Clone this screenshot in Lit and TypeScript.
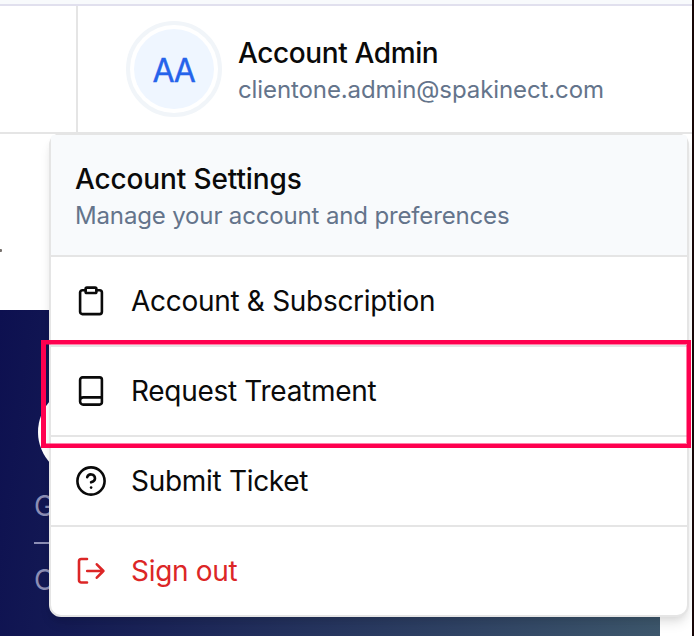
import { LitElement, html, css, svg } from "lit";
import { customElement } from "lit/decorators.js";
import { classMap } from "lit/directives/class-map.js";

const clipboard = svg`<rect x="9.600" y="1.600" width="10.800" height="5.400" rx="1.300"/><path d="M20.400 4.200h3.200a2.300 2.300 0 0 1 2.300 2.300v19.300a2.300 2.300 0 0 1-2.300 2.300H6.400a2.300 2.300 0 0 1-2.300-2.300V6.500a2.300 2.300 0 0 1 2.300-2.300h3.200"/>`;
const book = svg`<path d="M4.100 25V3.900a2.500 2.500 0 0 1 2.500-2.500h17a2.300 2.300 0 0 1 2.300 2.300v22.600a2.300 2.300 0 0 1-2.300 2.300H7.200a3.100 3.100 0 0 1-3.100-3.100V24.500a3.100 3.100 0 0 1 3.100-3.100h18.700"/>`;
const help = svg`<circle cx="15" cy="15" r="13.600"/><path d="M11.200 11.200a4 4 0 0 1 7.800 1.200c0 2.600-3.900 3.900-3.900 3.900"/><path d="M15.100 21.600h.01"/>`;
const logout = svg`<path d="M11 3H5.300A2.300 2.300 0 0 0 3 5.300v18.900a2.300 2.300 0 0 0 2.300 2.300H11"/><path d="M11.200 15h16.200M20.800 8.300l6.600 6.700-6.600 6.700"/>`;

const items = [
  { label: "Account & Subscription", icon: clipboard },
  { label: "Request Treatment", icon: book },
  { label: "Submit Ticket", icon: help },
  { label: "Sign out", icon: logout, danger: true },
];

@customElement("app-root")
export class AppRoot extends LitElement {
  static styles = css`
    :host {
      display: block;
      position: relative;
      width: 694px;
      height: 636px;
      overflow: hidden;
      box-sizing: border-box;
      border-right: 2px solid #160607;
      background: #fff;
      color: #0a0a0a;
      font-family: Inter, sans-serif;
    }
    * { box-sizing: border-box; }
    .page { display: flex; flex-direction: column; height: 100%; }
    .strip { height: 6px; background: #f8fafc; border-bottom: 2px solid #e1e0ee; }
    .bar { display: flex; height: 128px; border-bottom: 2px solid #e5e5e5; }
    .left { width: 78px; border-right: 2px solid #e5e5e5; }
    .user { display: flex; align-items: center; gap: 16px; padding-left: 48px; }
    .avatar {
      width: 96px; height: 96px; border-radius: 50%;
      border: 4px solid #f1f5f9; padding: 4px; background: #fff;
    }
    .initials {
      display: flex; align-items: center; justify-content: center;
      height: 100%; border-radius: 50%; background: #eff6ff;
      color: #2563eb; font-size: 32px; letter-spacing: -1.2px; padding: 2px 1px 0 0;
      -webkit-text-stroke: 0.4px #2563eb;
    }
    .title { font-size: 28px; line-height: 36px; font-weight: 500; white-space: nowrap; }
    .name { letter-spacing: -0.38px; }
    .heading { letter-spacing: -0.13px; }
    .sub { margin-top: 3px; font-size: 24px; line-height: 32px; color: #64748b; white-space: nowrap; }
    .email { letter-spacing: -0.1px; }
    .manage { letter-spacing: -0.15px; }
    .who { padding-top: 3px; }
    .body { height: 176px; padding-top: 115px; }
    .dot { width: 2px; height: 3px; background: #77716d; border-radius: 0 1px 1px 0; }
    .hero {
      width: 660px; flex: 1; padding: 76px 0 0 34px; overflow: hidden;
      background: linear-gradient(97deg, #0d1050, #3d576c);
      color: #8c8eb5; font-size: 28px; line-height: 34px;
    }
    .badge { width: 92px; height: 92px; margin-left: 4px; border-radius: 50%; background: #fff; }
    .stat { height: 40px; padding-top: 11px; }
    .rule { height: 2px; margin: 24px 0 8px; background: #8c8eb5; }
    .menu {
      position: absolute; left: 49px; top: 133px; width: 640px; height: 484px;
      border: 2px solid #e5e5e5; border-radius: 12px; background: #fff;
      box-shadow: 0 8px 12px -2px #0000001a, 0 4px 8px -4px #0000001a;
    }
    .head {
      height: 122px; padding: 26px 24px; background: #f8fafc;
      border-bottom: 2px solid #e5e5e5; border-radius: 3px 3px 0 0;
    }
    .item {
      display: flex; align-items: center; gap: 25px; height: 90px; padding-left: 25px;
      border-bottom: 2px solid #e5e5e5; font-size: 28px; line-height: 40px;
      letter-spacing: -0.3px;
    }
    .item:last-child { height: 88px; border-bottom: 0; }
    .danger { color: #dc2626; }
    .icon {
      width: 30px; height: 30px; fill: none; stroke: currentColor;
      stroke-width: 2.6; stroke-linecap: round; stroke-linejoin: round;
    }
    .highlight {
      position: absolute; left: 41px; top: 340px; width: 650px; height: 108px;
      border: 4px solid #ff004f; box-shadow: inset 0 0 0 1px #ff004f80, inset 1px 0 #ff004f;
    }
  `;

  render() {
    return html`
      <div class="page">
        <div class="strip"></div>
        <header class="bar">
          <div class="left"></div>
          <div class="user">
            <div class="avatar"><div class="initials">AA</div></div>
            <div class="who">
              <div class="title name">Account Admin</div>
              <div class="sub email">clientone.admin@spakinect.com</div>
            </div>
          </div>
        </header>
        <div class="body"><div class="dot"></div></div>
        <section class="hero">
          <div class="badge"></div>
          <div class="stat">G</div>
          <div class="rule"></div>
          <div class="stat">C</div>
        </section>
      </div>
      <nav class="menu">
        <div class="head">
          <div class="title heading">Account Settings</div>
          <div class="sub manage">Manage your account and preferences</div>
        </div>
        ${items.map(
          (item) => html`<div class=${classMap({ item: true, danger: !!item.danger })}>
            <svg class="icon" viewBox="0 0 30 30">${item.icon}</svg>
            <span>${item.label}</span>
          </div>`
        )}
      </nav>
      <div class="highlight"></div>
    `;
  }
}
